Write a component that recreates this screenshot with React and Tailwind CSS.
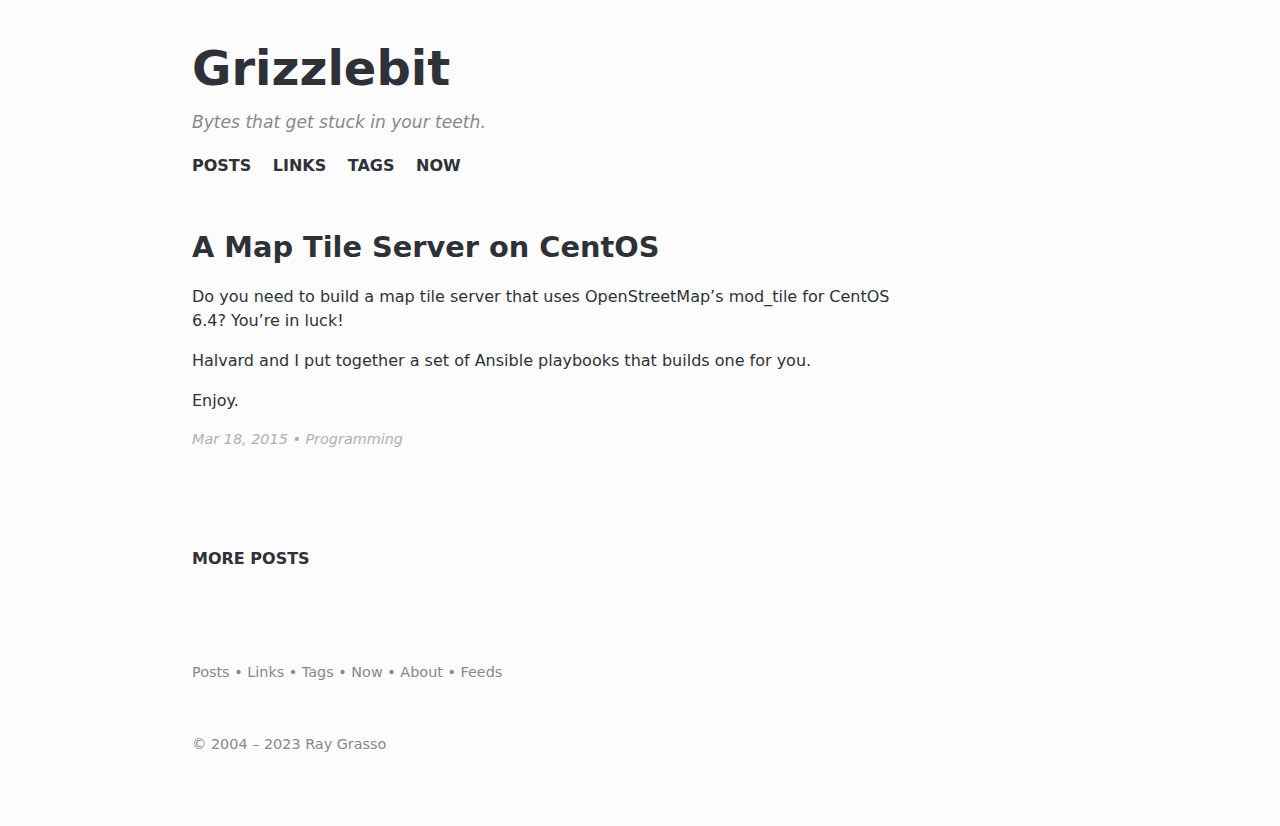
import React from 'react';

const navItems = ['Posts', 'Links', 'Tags', 'Now'];
const footerItems = ['Posts', 'Links', 'Tags', 'Now', 'About', 'Feeds'];

const App = () => {
    return (
        <div className="min-h-[826px] w-full bg-[#fcfcfc] text-[#2e3238] font-['DejaVu_Sans',sans-serif]">
            <div className="w-[896px] mx-auto pt-[36px]">
                {/* --- header --- */}
                <header>
                    <h1 className="text-[48px] leading-[64px] font-bold text-[#2e3238]">Grizzlebit</h1>
                    <p className="mt-[10px] text-[17.1px] leading-[24px] italic text-[#888888]">
                        Bytes that get stuck in your teeth.
                    </p>
                    <nav className="mt-[20px] flex gap-[21.5px] text-[16px] leading-[24px] font-bold uppercase">
                        {navItems.map(item => (
                            <a key={item} href="#" className="text-[#2e3238]">{item}</a>
                        ))}
                    </nav>
                </header>

                {/* --- post --- */}
                <article className="mt-[50px] max-w-[720px]">
                    <h2 className="text-[28.8px] leading-[40px] font-bold -translate-y-px">A Map Tile Server on CentOS</h2>
                    <div className="mt-[17px] text-[16px] leading-[24px] flex flex-col gap-[16px]">
                        <p>
                            Do you need to build a map tile server that uses OpenStreetMap’s mod_tile for CentOS 6.4? You’re in luck!
                        </p>
                        <p>Halvard and I put together a set of Ansible playbooks that builds one for you.</p>
                        <p>Enjoy.</p>
                    </div>
                    <p className="mt-[16px] text-[14.4px] leading-[20px] italic text-[#b0b0b0]">
                        Mar 18, 2015 • Programming
                    </p>
                </article>

                <h3 className="mt-[98px] text-[16px] leading-[24px] font-bold uppercase">More Posts</h3>

                {/* --- footer --- */}
                <footer className="mt-[91px] text-[14.4px] leading-[20px] text-[#888888]">
                    <p>
                        {footerItems.map((item, i) => (
                            <span key={item}>
                                {i > 0 && ' • '}
                                <a href="#">{item}</a>
                            </span>
                        ))}
                    </p>
                    <p className="mt-[52px]">© 2004 – 2023 Ray Grasso</p>
                </footer>
            </div>
        </div>
    );
};

export default App;
